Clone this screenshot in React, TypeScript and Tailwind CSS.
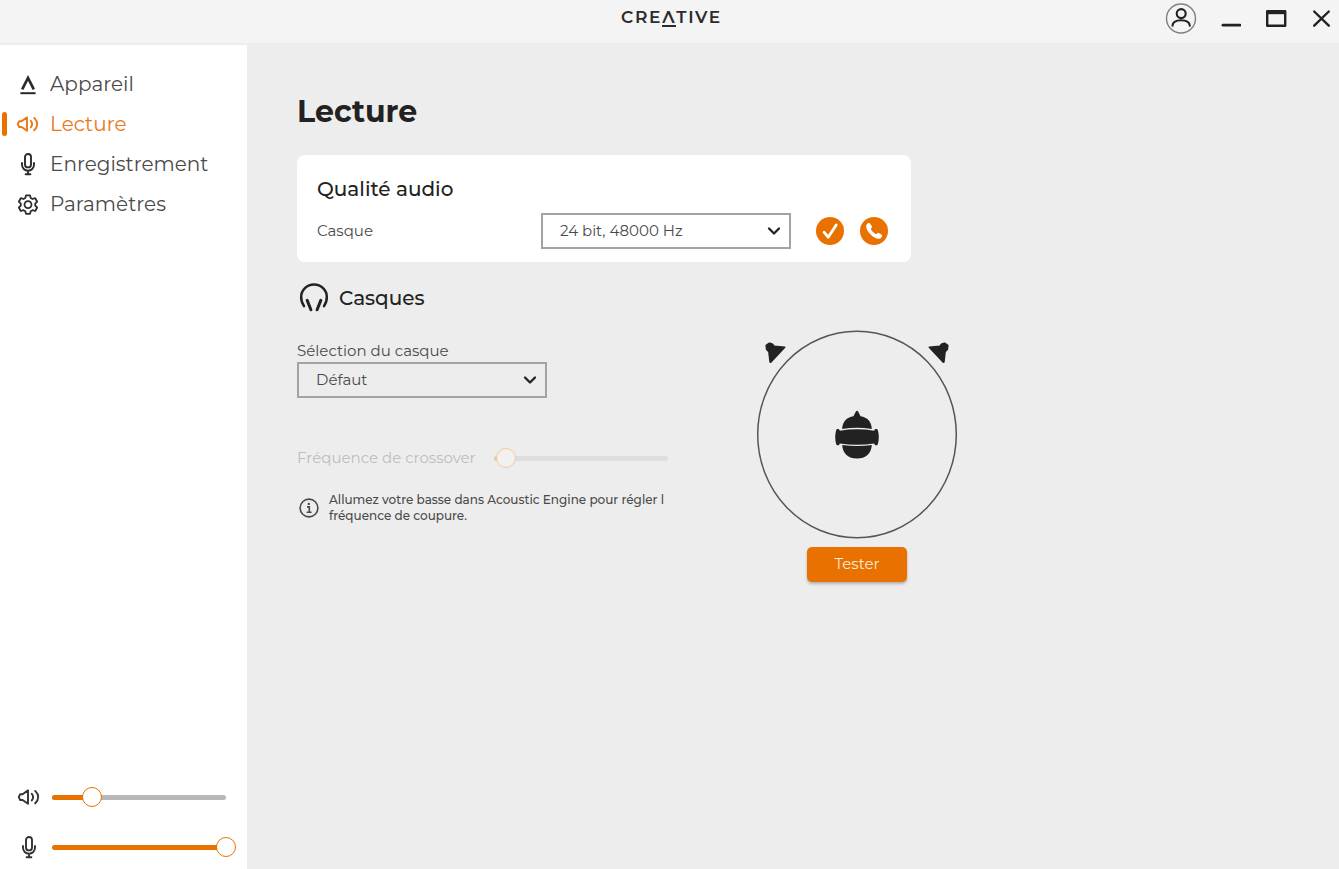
import { useState } from "react";
import type { ReactNode } from "react";

type IconProps = { className?: string };

const stroke = {
  fill: "none",
  stroke: "currentColor",
  strokeLinecap: "round",
  strokeLinejoin: "round",
} as const;

function DeviceIcon() {
  return (
    <svg className="size-6" viewBox="0 0 24 24" aria-hidden="true">
      <path d="M6.200 17.400 12 6l5.800 11.400" fill="none" stroke="currentColor" strokeWidth="2.700" strokeLinejoin="miter" />
      <path d="M4.400 21.200h15.200" fill="none" stroke="currentColor" strokeWidth="2" />
    </svg>
  );
}

function SpeakerIcon({ className = "size-6" }: IconProps) {
  return (
    <svg className={className} viewBox="0 0 24 24" aria-hidden="true">
      <g {...stroke} strokeWidth="1.900">
        <path d="M5.600 9.200 11 5.400v13.400L5.600 15H3.200L1.800 12.100 3.200 9.200Z" />
        <path d="M14.800 8.800c1.600 2 1.600 4.600 0 6.600" />
        <path d="M18.200 5.900c4 3.700 4 8.700 0 12.400" />
      </g>
    </svg>
  );
}

function MicIcon({ className = "size-6" }: IconProps) {
  return (
    <svg className={className} viewBox="0 0 24 24" aria-hidden="true">
      <g {...stroke} strokeWidth="1.900">
        <rect x="9" y="2" width="6" height="13.400" rx="3" />
        <path d="M6 11v1.800a6 6 0 0 0 12 0V11M12 18.800v3M9.600 22.200h4.800" />
      </g>
    </svg>
  );
}

function GearIcon() {
  return (
    <svg className="size-6" viewBox="0 0 24 24" aria-hidden="true">
      <g {...stroke} strokeWidth="1.800">
        <path d="M10 3.400h4l.7 2.600 1.800 1 2.700-.8 2 3.500-2 1.900v2l2 1.900-2 3.500-2.700-.8-1.800 1-.7 2.600h-4l-.7-2.600-1.800-1-2.700.8-2-3.500 2-1.900v-2l-2-1.900 2-3.500 2.700.8 1.800-1Z" />
        <circle cx="12" cy="12.600" r="3.500" />
      </g>
    </svg>
  );
}

function HeadphonesIcon() {
  return (
    <svg className="size-8" viewBox="0 0 32 32" aria-hidden="true">
      <g {...stroke} strokeWidth="2.500">
        <path d="M6 24.200C3.700 20.500 3 17.700 3.200 14.800a12.800 12.300 0 0 1 25.600 0c.2 2.900-.5 5.700-2.800 9.400" />
        <path d="m9.200 18.400 3.700 9.400M22.800 18.400l-3.700 9.400" strokeWidth="3" />
      </g>
    </svg>
  );
}

function InfoIcon() {
  return (
    <svg className="size-5 shrink-0" viewBox="0 0 20 20" aria-hidden="true">
      <circle cx="10" cy="10" r="8.900" fill="none" stroke="currentColor" strokeWidth="1.600" />
      <circle cx="9.800" cy="5.900" r="1.200" fill="currentColor" />
      <path d="M8 8.900h2.300v5M7.600 14.200h5" fill="none" stroke="currentColor" strokeWidth="1.600" />
    </svg>
  );
}

const navItems: { label: string; icon: ReactNode }[] = [
  { label: "Appareil", icon: <DeviceIcon /> },
  { label: "Lecture", icon: <SpeakerIcon /> },
  { label: "Enregistrement", icon: <MicIcon /> },
  { label: "Paramètres", icon: <GearIcon /> },
];

function Slider({ label, initial, disabled = false }: { label: string; initial: number; disabled?: boolean }) {
  const [value, setValue] = useState(initial);
  return (
    <div className="grid min-w-0 flex-1 items-center">
      <div className={`col-start-1 row-start-1 mx-[10px] h-[5px] overflow-hidden rounded-full ${disabled ? "bg-[#dedede]" : "bg-[#b8b8b8]"}`}>
        <div className={`h-full ${disabled ? "bg-[#f0c9a0]" : "bg-[#e97100]"}`} style={{ width: `${value}%` }} />
      </div>
      <input
        type="range"
        aria-label={label}
        min={0}
        max={100}
        value={value}
        disabled={disabled}
        onChange={(e) => setValue(Number(e.target.value))}
        className="col-start-1 row-start-1 h-5 w-full min-w-0 appearance-none bg-transparent [&::-webkit-slider-thumb]:size-5 [&::-webkit-slider-thumb]:appearance-none [&::-webkit-slider-thumb]:rounded-full [&::-webkit-slider-thumb]:border [&::-webkit-slider-thumb]:border-[#e97100] [&::-webkit-slider-thumb]:bg-white [&:disabled::-webkit-slider-thumb]:border-[#f0c9a0] [&:disabled::-webkit-slider-thumb]:bg-[#f3f1ef]"
      />
    </div>
  );
}

function Dropdown({ id, value }: { id: string; value: string }) {
  return (
    <div className="relative w-[250px] max-w-full">
      <select
        id={id}
        defaultValue={value}
        className="block h-9 w-full appearance-none border-2 border-[#a3a3a3] bg-transparent px-[17px] text-[15px] text-[#4a4a4a]"
      >
        <option>{value}</option>
      </select>
      <svg className="pointer-events-none absolute top-3 right-[10px] h-3 w-[14px] text-[#222]" viewBox="0 0 14 12" aria-hidden="true">
        <path d="m2 3.500 5 5 5-5" {...stroke} strokeWidth="2.300" />
      </svg>
    </div>
  );
}

function SpeakerLayout() {
  return (
    <svg className="w-[202px]" viewBox="0 0 202 209" role="img" aria-label="Disposition des haut-parleurs">
      <ellipse cx="101" cy="104.500" rx="99.300" ry="103.200" fill="none" stroke="#555" strokeWidth="1.500" />
      <g fill="#222" stroke="#222" strokeLinejoin="round">
        <path id="speaker" d="M10.200 15.400 13.400 13.200l2.800.8 2 2.300 10.500.9L14.700 32.200l-.6-.2-1.200-10.400-2.200-2.200Z" strokeWidth="1.600" />
        <use href="#speaker" transform="translate(202 0) scale(-1 1)" />
      </g>
      <g fill="#222">
        <path d="M86.200 98.900C86.500 91.500 90.500 87.300 97.500 86.200L99.600 82q1.400-2.400 2.800 0l2.100 4.200c7 1.100 11 5.300 11.300 12.700q-14.800-2.200-29.600 0Z" />
        <path d="M83.800 100.700q17.200-2.800 34.400 0c.2-2.200 3.200-2 3.600-.6q2 7.300 0 14.200c-.4 1.300-3.200 1.500-3.600-.9q-17.200 2.800-34.400 0c-.4 2.400-3.200 2.200-3.600.9q-2-6.900 0-14.200c.4-1.400 3.400-1.600 3.600.6Z" />
        <path d="M86.200 114.900q14.800 2.300 29.600 0c-.5 8.300-6 13.600-14.800 13.600s-14.300-5.300-14.800-13.600Z" />
      </g>
    </svg>
  );
}

export default function App() {
  const [active, setActive] = useState("Lecture");

  return (
    <div className="flex min-h-screen flex-col bg-[#ededed] font-['Montserrat','Inter',sans-serif] text-[#222]">
      <header className="grid h-[43px] grid-cols-3 items-start bg-[#f4f4f4]">
        <div />
        <div className="flex justify-center pt-[7px] pl-1 text-[17px] leading-5 font-semibold tracking-widest text-[#2b2b2b]">
          CRE<span className="h-5 border-b-2 border-[#2b2b2b]">Λ</span>TIVE
        </div>
        <div className="flex items-center justify-end gap-6 pt-[3px] pr-2">
          <button type="button" aria-label="Compte">
            <svg className="size-8" viewBox="0 0 32 32" aria-hidden="true">
              <circle cx="16" cy="15.500" r="14.500" fill="none" stroke="#808080" strokeWidth="1.400" />
              <g {...stroke} strokeWidth="2.100">
                <circle cx="16.200" cy="10.600" r="4.500" />
                <path d="M7.500 22.800c.2-4.200 3-5.600 8.600-5.600s8.500 1.400 8.700 5.600" />
              </g>
            </svg>
          </button>
          <button type="button" aria-label="Réduire">
            <svg className="h-8 w-5" viewBox="0 0 20 32" aria-hidden="true">
              <path d="M2 22.200h17" {...stroke} strokeWidth="2.800" />
            </svg>
          </button>
          <button type="button" aria-label="Agrandir">
            <svg className="h-8 w-[22px]" viewBox="0 0 22 32" aria-hidden="true">
              <path d="M2.200 8.200h18v14.600h-18Z" {...stroke} strokeWidth="2.400" />
              <path d="M2 7.200h18.200v4H2Z" fill="currentColor" />
            </svg>
          </button>
          <button type="button" aria-label="Fermer">
            <svg className="h-8 w-5" viewBox="0 0 20 32" aria-hidden="true">
              <path d="m3.200 8.500 14.600 14.200M17.800 8.500 3.200 22.700" {...stroke} strokeWidth="2.400" />
            </svg>
          </button>
        </div>
      </header>

      <div className="flex flex-1 pt-[2px]">
        <aside className="flex w-[247px] shrink-0 flex-col bg-white">
          <nav className="flex flex-col pt-[19px]">
            {navItems.map(({ label, icon }) => {
              const current = label === active;
              return (
                <button
                  key={label}
                  type="button"
                  aria-current={current ? "page" : undefined}
                  onClick={() => setActive(label)}
                  className={`flex h-10 items-center text-left ${current ? "text-[#e97817]" : "text-[#2b2b2b]"}`}
                >
                  <span className={`ml-[2px] h-6 w-[5px] rounded-full ${current ? "bg-[#e97100]" : ""}`} />
                  <span className="ml-[9px]">{icon}</span>
                  <span className={`ml-[10px] text-[20px] leading-7 ${current ? "" : "text-[#4a4a4a]"}`}>{label}</span>
                </button>
              );
            })}
          </nav>
          <div className="mt-auto flex flex-col gap-[10px] pr-[11px] pb-[2px] pl-[17px] text-[#333]">
            <div className="flex h-10 items-center gap-px">
              <SpeakerIcon className="size-6 shrink-0" />
              <Slider label="Volume de lecture" initial={23} />
            </div>
            <div className="flex h-10 items-center gap-px">
              <MicIcon className="size-6 shrink-0" />
              <Slider label="Volume du microphone" initial={100} />
            </div>
          </div>
        </aside>

        <main className="min-w-0 flex-1 px-[50px] pt-[47px]">
          <h1 className="text-[30px] leading-10 font-bold">Lecture</h1>

          <section className="mt-[23px] max-w-[614px] rounded-lg bg-white px-5 pt-5 pb-[13px]">
            <h2 className="text-[20px] leading-7 font-medium">Qualité audio</h2>
            <div className="mt-[10px] flex items-center">
              <label htmlFor="quality" className="flex-1 text-[15px] text-[#4a4a4a]">
                Casque
              </label>
              <Dropdown id="quality" value="24 bit, 48000 Hz" />
              <button type="button" aria-label="Appliquer" className="ml-6">
                <svg className="size-[30px]" viewBox="0 0 30 30" aria-hidden="true">
                  <circle cx="15" cy="15" r="14" fill="#e97100" />
                  <path d="m9 16.200 4.200 5L21.200 9" fill="none" stroke="#fff" strokeWidth="2.800" strokeLinecap="round" strokeLinejoin="round" />
                </svg>
              </button>
              <button type="button" aria-label="Communication" className="mr-[2px] ml-[14px]">
                <svg className="size-[30px]" viewBox="0 0 30 30" aria-hidden="true">
                  <circle cx="15" cy="15" r="14" fill="#e97100" />
                  <path
                    d="M7.600 8.600c.9-1.400 2.400-2 3.400-1.100l1.900 2.700c.6 1-.5 1.800-1.100 2.500.8 2.300 3.100 4.500 5.500 5.500.8-.7 1.500-1.700 2.500-1.200l2.900 1.800c1 .9.400 2.500-1 3.400-2.300 1.300-5.900.3-9.300-2.900-4-3.500-6.200-7.900-4.800-10.700Z"
                    fill="#fff"
                  />
                </svg>
              </button>
            </div>
          </section>

          <div className="mt-5 flex items-center gap-[9px] pl-px">
            <HeadphonesIcon />
            <h2 className="text-[20px] leading-7 font-medium">Casques</h2>
          </div>

          <div className="mt-4 flex items-start">
            <div className="w-[381px] shrink-0">
              <label htmlFor="headset" className="mt-[10px] block text-[15px] leading-[22px] text-[#4a4a4a]">
                Sélection du casque
              </label>
              <Dropdown id="headset" value="Défaut" />
              <div className="mt-[50px] flex h-5 items-center">
                <span className="w-[187px] text-[15px] whitespace-nowrap text-[#bdbdbd]">Fréquence de crossover</span>
                <Slider label="Fréquence de crossover" initial={7} disabled />
              </div>
              <div className="mt-6 flex items-center gap-[10px] pl-[2px] text-[#4a4a4a]">
                <InfoIcon />
                <p className="text-[12px] leading-4 font-medium whitespace-nowrap">
                  Allumez votre basse dans Acoustic Engine pour régler l
                  <br />
                  fréquence de coupure.
                </p>
              </div>
            </div>
            <div className="ml-[78px] flex flex-col items-center gap-2">
              <SpeakerLayout />
              <button
                type="button"
                className="h-[35px] w-[100px] rounded-[5px] bg-[#e97100] text-[15px] text-[#fdebd8] shadow-[0_2px_3px_rgba(0,0,0,0.25)]"
              >
                Tester
              </button>
            </div>
          </div>
        </main>
      </div>
    </div>
  );
}
